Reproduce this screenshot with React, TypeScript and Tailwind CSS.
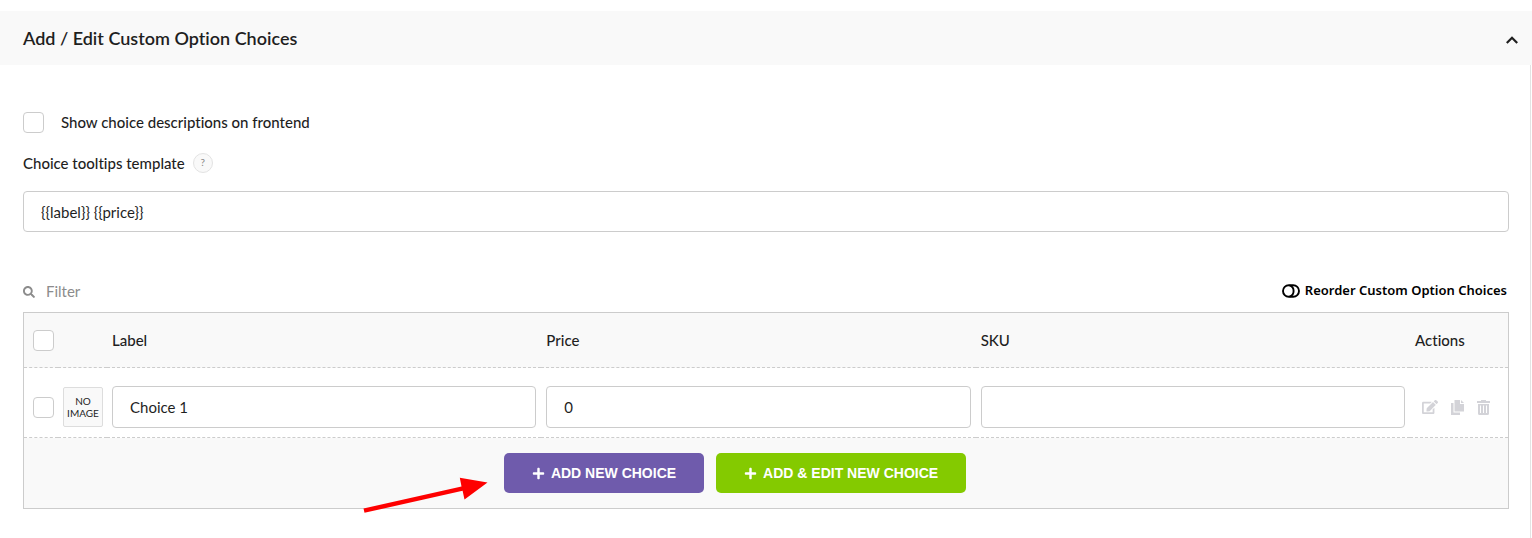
import React from "react";
import { FaEdit, FaPlus, FaSearch } from "react-icons/fa";

const checkbox =
  "block size-[21px] shrink-0 appearance-none rounded-[4px] border border-[#ccc] bg-white checked:border-[#6f5bac] checked:bg-[#6f5bac]";
const field =
  "block w-full min-w-0 rounded-[4px] border border-[#ccc] bg-white px-[17px] text-[15px] text-[#1f1f1f] outline-none focus:border-[#6f5bac]";
const action = "block text-[#d3d3d8] hover:text-[#8a8a8f]";
const dashed = "border-b border-dashed border-[#ccc]";
const cta =
  "flex h-10 items-center gap-[6px] rounded-[5px] px-7 text-[14px] font-bold uppercase text-white";

function CopyIcon() {
  return (
    <svg viewBox="0 0 13 15" className="h-[15px] w-[13px]" fill="currentColor" aria-hidden="true">
      <path d="M0 3h2.500v9.500H9V15H0z" />
      <path d="M3.500 0H9v4h4v7.500H3.500z" />
      <path d="M10 0l3 3h-3z" />
    </svg>
  );
}

function TrashIcon() {
  return (
    <svg viewBox="0 0 13 15" className="h-[15px] w-[13px]" fill="currentColor" aria-hidden="true">
      <path d="M4 0h5v1h4v2H0V1h4z" />
      <path
        fillRule="evenodd"
        d="M1 4h11v9.5A1.5 1.5 0 0 1 10.500 15h-8A1.500 1.500 0 0 1 1 13.500zM3 5.500v7.500h1V5.500zM6 5.500v7.500h1V5.500zM9 5.500v7.500h1V5.500z"
      />
    </svg>
  );
}

function ToggleIcon() {
  return (
    <svg viewBox="0 0 18 14" className="h-[14px] w-[18px]" fill="none" stroke="currentColor" strokeWidth="1.900" aria-hidden="true">
      <rect x="1" y="1.200" width="16" height="11.600" rx="5.800" />
      <path d="M7.500 1.400C10.300 2.200 11.600 4.400 11.600 7s-1.300 4.800-4.100 5.600" />
    </svg>
  );
}

function PointerArrow() {
  return (
    <svg
      viewBox="0 0 126 36"
      className="pointer-events-none absolute right-full top-[24px] mr-[15px] h-[36px] w-[126px]"
      fill="#fe0000"
      aria-hidden="true"
    >
      <path d="M.5 31.500 98.500 9.500 96.800 .7 124.500 5.500 101.500 22.500 99.600 13.800 1.500 35.800z" />
    </svg>
  );
}

export default function App() {
  return (
    <div className="flex min-h-screen flex-col bg-white pt-[11px] font-['Lato','Liberation_Sans',sans-serif] text-[15px] text-[#1f1f1f] [font-variant-ligatures:none]">
      <header className="flex h-[54px] items-center justify-between bg-[#f9f9f9] pl-[23px] pr-[14px]">
        <h2 className="text-[18px] font-semibold">Add / Edit Custom Option Choices</h2>
        <button type="button" aria-label="Collapse section" className="pt-1">
          <svg viewBox="0 0 12 8" className="h-[8px] w-[12px]" fill="none" stroke="currentColor" strokeWidth="2.200" aria-hidden="true">
            <path d="M.8 7 6 1.800 11.200 7" />
          </svg>
        </button>
      </header>

      <main className="mr-px grow border-r border-[#e3e3e3] pb-6 pl-[23px] pr-[21px] pt-[46px]">
        <div className="flex items-center gap-[17px]">
          <input id="show-descriptions" type="checkbox" className={checkbox} />
          <label htmlFor="show-descriptions" className="font-medium">
            Show choice descriptions on frontend
          </label>
        </div>

        <div className="mt-[18px] flex items-center gap-2">
          <label htmlFor="tooltip-template" className="font-medium">
            Choice tooltips template
          </label>
          <button
            type="button"
            aria-label="Help"
            className="flex size-5 items-center justify-center rounded-full border border-[#e3e3e3] bg-[#f9f9f9] text-[10px] text-[#888]"
          >
            ?
          </button>
        </div>
        <input id="tooltip-template" type="text" defaultValue="{{label}} {{price}}" className={`${field} mt-[17px] h-[41px]`} />

        <div className="mt-[47px] flex h-6 items-center justify-between">
          <div className="flex min-w-0 items-center gap-[11px] text-[#8c8c8c]">
            <FaSearch className="mt-[2px] size-3" aria-hidden="true" />
            <input
              type="text"
              aria-label="Filter"
              placeholder="Filter"
              className="w-48 bg-transparent text-[15px] text-[#1f1f1f] outline-none placeholder:text-[#8c8c8c]"
            />
          </div>
          <button type="button" className="flex items-center gap-[5px] pr-[2px] font-['Noto_Sans','Open_Sans',sans-serif] text-[13px] font-semibold text-black">
            <ToggleIcon />
            Reorder Custom Option Choices
          </button>
        </div>

        <table className="mt-[9px] w-full table-fixed border-separate border-spacing-0 border border-[#ccc] text-left">
          <colgroup>
            <col className="w-[34px]" />
            <col className="w-[49px]" />
            <col />
            <col />
            <col />
            <col className="w-[98px]" />
          </colgroup>
          <thead className="bg-[#f9f9f9]">
            <tr className="h-[55px]">
              <th className={`${dashed} pl-[9px]`}>
                <input type="checkbox" aria-label="Select all choices" className={checkbox} />
              </th>
              <td className={dashed} />
              <th className={`${dashed} px-[5px] font-medium`}>Label</th>
              <th className={`${dashed} px-[5px] font-medium`}>Price</th>
              <th className={`${dashed} px-[5px] font-medium`}>SKU</th>
              <th className={`${dashed} px-[5px] font-medium`}>Actions</th>
            </tr>
          </thead>
          <tbody>
            <tr className="h-[70px]">
              <td className={`${dashed} pl-[9px] pt-[9px]`}>
                <input type="checkbox" aria-label="Select Choice 1" className={checkbox} />
              </td>
              <td className={`${dashed} px-[5px] pt-[9px]`}>
                <button
                  type="button"
                  className="flex size-10 items-center justify-center rounded-[2px] border border-[#ddd] bg-[#f9f9f9] text-center text-[10px] leading-[12px]"
                >
                  NO
                  <br />
                  IMAGE
                </button>
              </td>
              <td className={`${dashed} px-[5px] pt-[9px]`}>
                <input type="text" aria-label="Label" defaultValue="Choice 1" className={`${field} h-[42px]`} />
              </td>
              <td className={`${dashed} px-[5px] pt-[9px]`}>
                <input type="text" aria-label="Price" defaultValue="0" className={`${field} h-[42px]`} />
              </td>
              <td className={`${dashed} px-[5px] pt-[9px]`}>
                <input type="text" aria-label="SKU" className={`${field} h-[42px]`} />
              </td>
              <td className={`${dashed} pl-3 pt-[9px]`}>
                <div className="flex items-center gap-[13px]">
                  <button type="button" aria-label="Edit" className={action}>
                    <FaEdit className="size-4" />
                  </button>
                  <button type="button" aria-label="Duplicate" className={action}>
                    <CopyIcon />
                  </button>
                  <button type="button" aria-label="Delete" className={action}>
                    <TrashIcon />
                  </button>
                </div>
              </td>
            </tr>
          </tbody>
          <tfoot className="bg-[#f9f9f9]">
            <tr className="h-[70px]">
              <td colSpan={6} className="pr-[62px]">
                <div className="flex justify-center gap-3 font-['Liberation_Sans',Arial,sans-serif]">
                  <div className="relative">
                    <PointerArrow />
                    <button type="button" className={`${cta} bg-[#6f5bac]`}>
                      <FaPlus className="size-[13px]" aria-hidden="true" />
                      Add New Choice
                    </button>
                  </div>
                  <button type="button" className={`${cta} bg-[#84ca00]`}>
                    <FaPlus className="size-[13px]" aria-hidden="true" />
                    Add &amp; Edit New Choice
                  </button>
                </div>
              </td>
            </tr>
          </tfoot>
        </table>
      </main>
    </div>
  );
}
